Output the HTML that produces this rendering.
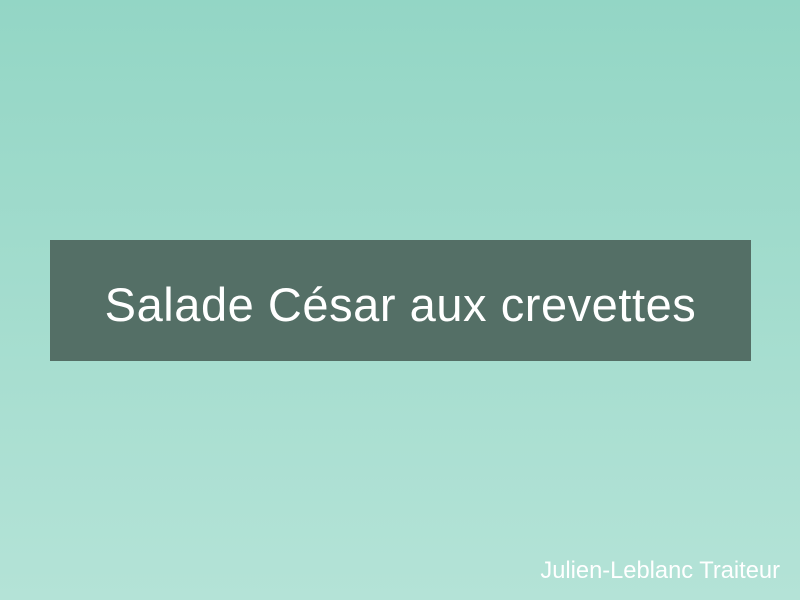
<!DOCTYPE html>
<html><head><meta charset="utf-8"><style>
html,body{margin:0;padding:0}
body{width:800px;height:600px;position:relative;overflow:hidden;background:linear-gradient(180deg,#93d6c5 0%,#b4e3d7 100%);font-family:"Liberation Sans",sans-serif}
.box{position:absolute;left:50px;top:240px;width:701px;height:121px;background:#546f66;color:#fff;font-size:47px;text-align:center;box-sizing:border-box;padding-top:8px;line-height:113px;letter-spacing:0.55px}
.f{position:absolute;right:20px;top:556px;color:#fff;font-size:23.7px;line-height:30px}
</style></head><body>
<div class="box">Salade César aux crevettes</div>
<div class="f">Julien-Leblanc Traiteur</div>
</body></html>
